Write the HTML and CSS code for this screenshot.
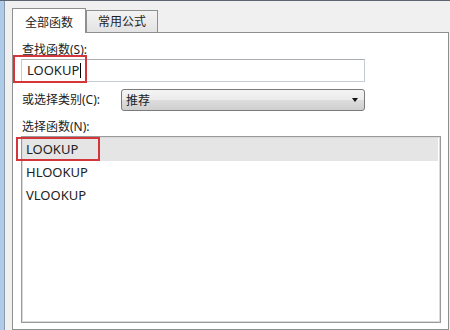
FILE: index.html
```html
<!DOCTYPE html>
<html lang="zh-CN">
<head>
  <meta charset="UTF-8">
  <title>插入函数</title>
  <link rel="stylesheet" href="styles.css">
</head>
<body>
  <div class="frame">
    <div class="edge"></div>
    <div class="dialog">
      <div class="tabs">
        <div class="tab active">全部函数</div>
        <div class="tab">常用公式</div>
      </div>

      <div class="panel">
        <div class="label">查找函数(S):</div>
        <div class="textbox">LOOKUP<span class="caret"></span></div>

        <div class="row">
          <div class="label">或选择类别(C):</div>
          <div class="combo">
            <span>推荐</span>
            <span class="arrow"></span>
          </div>
        </div>

        <div class="label list-label">选择函数(N):</div>
        <div class="listbox">
          <div class="item selected">LOOKUP</div>
          <div class="item">HLOOKUP</div>
          <div class="item">VLOOKUP</div>
        </div>

        <!-- red annotation boxes -->
        <div class="mark mark-search"></div>
        <div class="mark mark-list"></div>
      </div>
    </div>
  </div>
</body>
</html>
```

FILE: styles.css
```css
body {
  margin: 0;
  width: 450px;
  height: 330px;
  overflow: hidden;
  background: #f0f0f0;
  font-family: "Noto Sans", "Noto Sans CJK SC", sans-serif;
  font-size: 12px;
  color: #222;
}

.frame {
  display: flex;
  height: 329px;
  border-top: 1px solid #5c6672;
}

.edge {
  width: 4px;
  background: #aecbea;
  border-right: 1px solid #8c9bab;
}

.dialog {
  flex: 1;
  padding: 7px 1px 0 7px;
  background: #f0f0f0;
}

.tabs {
  display: flex;
  align-items: flex-end;
  height: 24px;
}

.tab {
  box-sizing: border-box;
  height: 22px;
  width: 72px;
  line-height: 21px;
  text-align: center;
  border: 1px solid #8e8f8f;
  border-bottom: none;
  background: linear-gradient(#f3f3f3, #e3e3e3);
}

.tab.active {
  position: relative;
  z-index: 1;
  width: 74px;
  height: 25px;
  margin-bottom: -1px;
  line-height: 27px;
  background: #ffffff;
}

.panel {
  position: relative;
  box-sizing: border-box;
  height: 298px;
  border: 1px solid #8e8f8f;
  background: #ffffff;
  padding: 9px 0 0 8px;
}

.label {
  line-height: 16px;
  padding-left: 1px;
}

.textbox {
  box-sizing: border-box;
  width: 344px;
  height: 23px;
  margin-top: 1px;
  border: 1px solid #c6ccd4;
  border-top-color: #abadb3;
  padding-left: 5px;
  line-height: 21px;
  font-size: 13px;
}

.caret {
  display: inline-block;
  width: 1px;
  height: 15px;
  margin-left: 1px;
  vertical-align: -3px;
  background: #000;
}

.row {
  display: grid;
  grid-template-columns: 100px 244px;
  align-items: center;
  margin-top: 7px;
}

.combo {
  box-sizing: border-box;
  height: 22px;
  display: flex;
  align-items: center;
  justify-content: space-between;
  padding: 0 6px 0 4px;
  border: 1px solid #7a7a7a;
  border-radius: 3px;
  background: linear-gradient(#f4f4f4, #ebebeb 50%, #dddddd 50%, #cfcfcf);
}

.arrow {
  width: 0;
  height: 0;
  border-left: 3.5px solid transparent;
  border-right: 3.5px solid transparent;
  border-top: 4px solid #111;
}

.list-label {
  margin-top: 8px;
}

.listbox {
  box-sizing: border-box;
  width: 420px;
  height: 187px;
  margin-top: 1px;
  border: 1px solid #9a9a9a;
  box-shadow: inset 1px 1px 0 #dadada, inset -1px -1px 0 #dadada;
  padding: 1px 2px 0 1px;
}

.item {
  height: 23px;
  line-height: 23px;
  padding-left: 3px;
  font-size: 13px;
}

.item.selected {
  background: #e5e5e5;
}

.mark {
  position: absolute;
  box-sizing: border-box;
  border: 2px solid #d3353b;
}

.mark-search {
  left: 0;
  top: 22px;
  width: 74px;
  height: 28px;
}

.mark-list {
  left: 3px;
  top: 104px;
  width: 84px;
  height: 24px;
}
```
